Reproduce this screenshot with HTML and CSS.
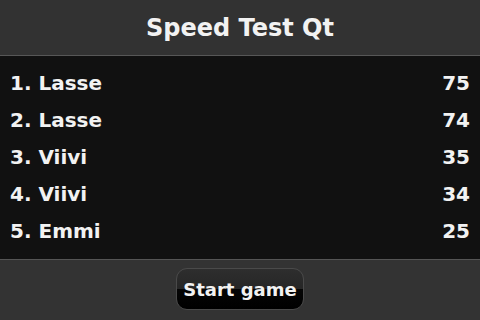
FILE: index.html
```html
<!DOCTYPE html>
<html>
<head>
<meta charset="utf-8">
<link rel="stylesheet" href="styles.css">
</head>
<body>
<div class="app">
  <header class="title-bar">Speed Test Qt</header>
  <ol class="scores">
    <li class="row"><span>1. Lasse</span><span>75</span></li>
    <li class="row"><span>2. Lasse</span><span>74</span></li>
    <li class="row"><span>3. Viivi</span><span>35</span></li>
    <li class="row"><span>4. Viivi</span><span>34</span></li>
    <li class="row"><span>5. Emmi</span><span>25</span></li>
  </ol>
  <footer class="footer">
    <button class="start">Start game</button>
  </footer>
</div>
</body>
</html>
```
FILE: styles.css
```css
html, body {
  margin: 0;
  padding: 0;
  background: #333333;
}
.app {
  width: 480px;
  height: 320px;
  display: flex;
  flex-direction: column;
  font-family: "DejaVu Sans", sans-serif;
  font-weight: bold;
  color: #f2f2f2;
  background: #333333;
}
.title-bar {
  height: 55px;
  border-bottom: 1px solid #575757;
  display: flex;
  align-items: center;
  justify-content: center;
  font-size: 24px;
  background: #323232;
}
.scores {
  list-style: none;
  margin: 0;
  padding: 8px 10px 10px 10px;
  background: #111111;
  height: 185px;
  border-bottom: 1px solid #555555;
}
.row {
  height: 37px;
  display: flex;
  align-items: center;
  justify-content: space-between;
  font-size: 20px;
}
.footer {
  flex: 1;
  display: flex;
  justify-content: center;
  align-items: flex-start;
  padding-top: 8px;
}
.start {
  width: 128px;
  height: 42px;
  border: 1px solid #4a4a4a;
  border-radius: 11px;
  background: linear-gradient(to bottom, #2e2e2e 0%, #262626 50%, #050505 50%, #000000 100%);
  color: #f2f2f2;
  font-family: "DejaVu Sans", sans-serif;
  font-weight: bold;
  font-size: 18px;
  padding: 0;
}
```
